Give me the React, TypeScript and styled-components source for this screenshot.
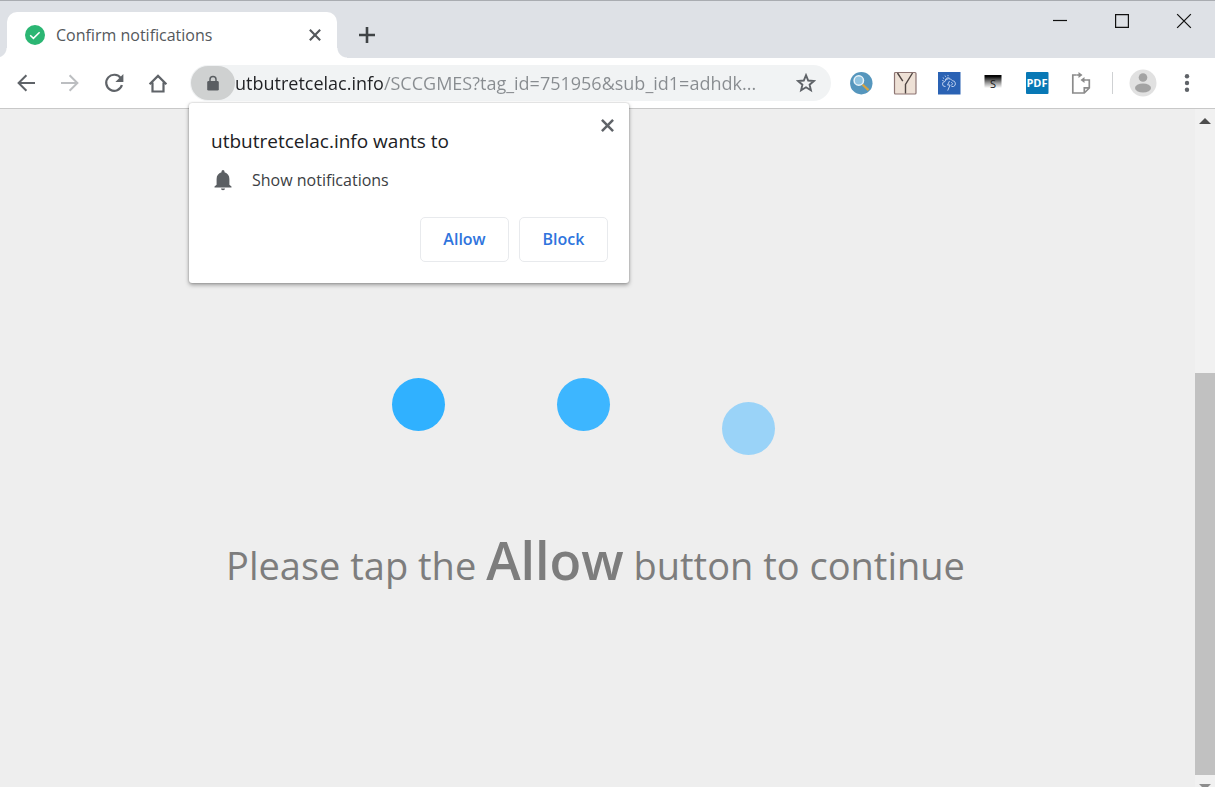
import React from "react";
import styled, { createGlobalStyle } from "styled-components";

const Global = createGlobalStyle`
  *, *::before, *::after { box-sizing: border-box; }
  body { margin: 0; background: #eeeeee; font-family: "Open Sans", "Noto Sans", sans-serif; }
  button { font-family: inherit; padding: 0; border: 0; background: none; }
`;

const Window = styled.div`
  display: flex;
  flex-direction: column;
  height: 100vh;
  overflow: hidden;
`;

const TabStrip = styled.header`
  display: flex;
  align-items: flex-end;
  height: 58px;
  padding-left: 7px;
  background: #dee1e6;
  border-top: 1px solid #a9acb1;
`;

const Tab = styled.div`
  position: relative;
  display: flex;
  align-items: center;
  flex: 0 1 330px;
  height: 46px;
  padding: 0 12px 0 18px;
  background: #ffffff;
  border-radius: 10px 10px 0 0;

  &::before,
  &::after {
    content: "";
    position: absolute;
    bottom: 0;
    width: 10px;
    height: 10px;
  }
  &::before {
    right: 100%;
    background: radial-gradient(circle at 0 0, transparent 9px, #ffffff 10px);
  }
  &::after {
    left: 100%;
    background: radial-gradient(circle at 100% 0, transparent 9px, #ffffff 10px);
  }
`;

const TabTitle = styled.span`
  flex: 1;
  margin-left: 11px;
  font-size: 16px;
  line-height: 20px;
  color: #54585c;
  white-space: nowrap;
`;

const IconButton = styled.button<{ $w?: number; $h?: number }>`
  display: flex;
  flex: none;
  align-items: center;
  justify-content: center;
  width: ${(p) => p.$w ?? 44}px;
  height: ${(p) => p.$h ?? 36}px;
`;

const WindowControls = styled.div`
  display: flex;
  align-self: flex-start;
  margin-left: auto;
`;

const Toolbar = styled.div`
  display: flex;
  align-items: center;
  height: 51px;
  padding: 0 6px 0 4px;
  background: #ffffff;
  border-bottom: 1px solid #c8c8c8;
`;

const Group = styled.div`
  display: flex;
  flex: none;
  align-items: center;
`;

const Omnibox = styled.div`
  position: relative;
  display: flex;
  flex: 1;
  align-items: center;
  min-width: 0;
  height: 36px;
  margin: 0 8px 0 10px;
  padding-left: 1px;
  background: #f1f3f4;
  border-radius: 18px;
`;

const LockButton = styled(IconButton)`
  height: 34px;
  background: #cfd1d1;
  border-radius: 17px;
`;

const Address = styled.input`
  flex: 1;
  min-width: 0;
  padding: 0;
  border: 0;
  outline: 0;
  font-family: inherit;
  font-size: 18px;
  line-height: 26px;
  color: #80868b;
  background: linear-gradient(90deg, #202124 149px, #888c90 149px);
  background-clip: text;
  -webkit-background-clip: text;
  -webkit-text-fill-color: transparent;
`;

const Divider = styled.span`
  width: 1px;
  height: 22px;
  margin: 0 8px 0 9px;
  background: #cfd1d3;
`;

const Popup = styled.section`
  position: absolute;
  z-index: 2;
  top: calc(100% + 2px);
  left: -1px;
  width: 440px;
  padding: 24px 21px 21px 22px;
  background: #ffffff;
  border-radius: 3px;
  box-shadow: 0 2px 4px rgba(0, 0, 0, 0.35), 0 0 2px rgba(0, 0, 0, 0.25);
`;

const PopupTitle = styled.h1`
  margin: 0;
  font-size: 19px;
  font-weight: 400;
  line-height: 28px;
  color: #202124;
`;

const PopupClose = styled(IconButton)`
  position: absolute;
  top: 10px;
  right: 10px;
`;

const Permission = styled.p`
  display: flex;
  align-items: center;
  gap: 17px;
  height: 24px;
  margin: 13px 0 25px;
  font-size: 16px;
  line-height: 24px;
  color: #3c4043;
`;

const PopupActions = styled.div`
  display: flex;
  justify-content: flex-end;
  gap: 10px;
`;

const ActionButton = styled.button`
  width: 89px;
  height: 45px;
  && {
    padding-bottom: 2px;
    border: 1px solid #e8eaed;
  }
  border-radius: 5px;
  font-size: 16px;
  font-weight: 600;
  color: #2f74dd;
`;

const Viewport = styled.div`
  display: flex;
  flex: 1;
  min-height: 0;
`;

const Page = styled.main`
  display: flex;
  flex: 1;
  flex-direction: column;
  align-items: center;
  padding-top: 269px;
  background: #eeeeee;
`;

const Dots = styled.div`
  display: flex;
  gap: 112px;
  padding-right: 29px;
`;

const Dot = styled.span<{ $color: string; $drop?: boolean }>`
  width: 53px;
  height: 53px;
  margin-top: ${(p) => (p.$drop ? 24 : 0)}px;
  background: ${(p) => p.$color};
  border-radius: 50%;
`;

const Message = styled.p`
  margin: 65px 0 0;
  padding-right: 4px;
  font-size: 38px;
  line-height: 80px;
  color: #7d7d7d;
  white-space: nowrap;

  strong {
    font-size: 52px;
    font-weight: 600;
  }
`;

const Scrollbar = styled.div`
  display: flex;
  flex: none;
  flex-direction: column;
  width: 20px;
  background: #f1f1f1;
`;

const Track = styled.div`
  display: grid;
  flex: 1;
  grid-template-rows: 240fr 402fr;
`;

const Thumb = styled.div`
  grid-row: 2;
  background: #c1c1c1;
`;

const CloseIcon = ({ size, width, color }: { size: number; width: number; color: string }) => (
  <svg width={size} height={size} viewBox="0 0 14 14" fill="none" stroke={color} strokeWidth={width}>
    <path d="M1 1l12 12M13 1L1 13" />
  </svg>
);

const grey = "#5f6368";

export default function App() {
  return (
    <Window>
      <Global />
      <TabStrip>
        <Tab>
          <svg width="20" height="20" viewBox="0 0 20 20">
            <circle cx="10" cy="10" r="10" fill="#2bb673" />
            <path d="M5.2 10.3l3.2 3.1 6.2-6.2" fill="none" stroke="#fff" strokeWidth="1.5" />
          </svg>
          <TabTitle>Confirm notifications</TabTitle>
          <IconButton $w={20} aria-label="Close tab">
            <CloseIcon size={12} width={2.5} color="#54585c" />
          </IconButton>
        </Tab>
        <IconButton $w={60} $h={46} aria-label="New tab">
          <svg width="18" height="18" viewBox="0 0 18 18" stroke="#3f4346" strokeWidth="2.6">
            <path d="M9 1v16M1 9h16" />
          </svg>
        </IconButton>
        <WindowControls>
          <IconButton $w={62} $h={40} aria-label="Minimize">
            <svg width="14" height="14" viewBox="0 0 14 14" stroke="#111" strokeWidth="1.2">
              <path d="M0 6.5h14" />
            </svg>
          </IconButton>
          <IconButton $w={62} $h={40} aria-label="Maximize">
            <svg width="14" height="14" viewBox="0 0 14 14" fill="none" stroke="#111" strokeWidth="1.2">
              <path d="M.6.6h12.8v12.8H.6z" />
            </svg>
          </IconButton>
          <IconButton $w={62} $h={40} aria-label="Close window">
            <CloseIcon size={16} width={1.1} color="#111" />
          </IconButton>
        </WindowControls>
      </TabStrip>

      <Toolbar>
        <Group as="nav">
          <IconButton aria-label="Back">
            <svg width="18" height="18" viewBox="0 0 18 18" fill="none" stroke={grey} strokeWidth="2">
              <path d="M18 9H1.6M9.4 1.2L1.6 9l7.8 7.8" />
            </svg>
          </IconButton>
          <IconButton aria-label="Forward">
            <svg width="18" height="18" viewBox="0 0 18 18" fill="none" stroke="#bcbec1" strokeWidth="2">
              <path d="M0 9h16.4M8.6 1.2L16.4 9l-7.8 7.8" />
            </svg>
          </IconButton>
          <IconButton aria-label="Reload">
            <svg width="20" height="20" viewBox="0 0 20 20" fill="none" stroke={grey} strokeWidth="2.2">
              <path d="M16.8 5.2A8 8 0 1 0 17.9 12" />
              <path d="M19.4 1v8h-8z" fill={grey} stroke="none" />
            </svg>
          </IconButton>
          <IconButton aria-label="Home">
            <svg width="20" height="20" viewBox="0 0 20 20" fill="none" stroke={grey} strokeWidth="2.2">
              <path d="M1.6 11.3L10 2.9l8.400 8.400M4.500 9.500v9h11v-9" />
            </svg>
          </IconButton>
        </Group>

        <Omnibox>
          <LockButton aria-label="View site information">
            <svg width="12" height="16" viewBox="0 0 12 16">
              <rect x="0.2" y="6" width="11.6" height="9.6" rx="1.4" fill="#5a5e62" />
              <path d="M3 7V4.500a3 3 0 0 1 6 0V7" fill="none" stroke="#5a5e62" strokeWidth="1.5" />
            </svg>
          </LockButton>
          <Address
            aria-label="Address"
            type="text"
            defaultValue="utbutretcelac.info/SCCGMES?tag_id=751956&sub_id1=adhdk..."
          />
          <IconButton $w={50} aria-label="Bookmark this page">
            <svg width="20" height="20" viewBox="0 0 20 20" fill="none" stroke={grey} strokeWidth="1.9">
              <path d="M10 2.200l2.200 5.300 5.700.5-4.300 3.700 1.300 5.600-4.900-3-4.900 3 1.300-5.600L2.100 8l5.700-.5z" />
            </svg>
          </IconButton>

          <Popup role="dialog" aria-labelledby="permission-title">
            <PopupTitle id="permission-title">utbutretcelac.info wants to</PopupTitle>
            <PopupClose $w={24} $h={24} aria-label="Dismiss">
              <CloseIcon size={13} width={2.7} color={grey} />
            </PopupClose>
            <Permission>
              <svg width="24" height="24" viewBox="0 0 24 24" fill="#5b5f63">
                <path d="M12 22.3c1.100 0 2-.8 2-1.700h-4c0 .9.900 1.700 2 1.700zm6.400-5.600V11c0-3.300-1.800-6-4.900-6.700V3.600a1.500 1.500 0 0 0-3 0v.7C7.400 5 5.600 7.700 5.600 11v5.700L3.500 18.500v1h17v-1z" />
              </svg>
              Show notifications
            </Permission>
            <PopupActions>
              <ActionButton>Allow</ActionButton>
              <ActionButton>Block</ActionButton>
            </PopupActions>
          </Popup>
        </Omnibox>

        <Group>
          <IconButton aria-label="Search extension">
            <svg width="24" height="24" viewBox="0 0 24 24">
              <circle cx="12.300" cy="12.200" r="11.200" fill="#5596bd" />
              <path d="M13.500 13.500l6 5.600" stroke="#d9a441" strokeWidth="2.200" />
              <circle cx="9.800" cy="9.500" r="4.700" fill="#8fc3e0" stroke="#e9f3f8" strokeWidth="1.500" />
            </svg>
          </IconButton>
          <IconButton aria-label="Y extension">
            <svg width="24" height="24" viewBox="0 0 24 24" fill="none">
              <rect x="1.500" y="1.500" width="21.500" height="21.500" rx="1" fill="#eee1d6" stroke="#8d7573" strokeWidth="1.200" />
              <path d="M4.500 2l5.300 8.200M19.500 2l-7 11.500V22.500" stroke="#4f4542" strokeWidth="1.400" />
            </svg>
          </IconButton>
          <IconButton aria-label="Weather extension">
            <svg width="24" height="24" viewBox="0 0 24 24" fill="none">
              <rect x="1" y="1" width="22.500" height="22.500" fill="#2a62b4" />
              <g stroke="#bcd0ee" strokeWidth="1">
                <path d="M8.500 15.500H8a2.500 2.500 0 0 1 0-5 4 4 0 0 1 7.300-.8 3 3 0 0 1 1.200 5.800h-2" />
                <path d="M8.300 9.300a2.800 2.800 0 0 1 4.400-2M7 7.500L5.800 6.700M8.600 5.800L8 4.600M11 5.200V4M6.500 9.500H5.300" />
                <path d="M12.500 10l-2 4h2.600l-2.400 5.600M14 11.500c2 0 2 2.500 0 2.500" />
              </g>
            </svg>
          </IconButton>
          <IconButton aria-label="S extension">
            <svg width="20" height="20" viewBox="0 0 20 20">
              <defs>
                <linearGradient id="fade" x1="0" y1="0" x2="0" y2="1">
                  <stop offset="0.100" stopColor="#050505" />
                  <stop offset="0.600" stopColor="#999" />
                  <stop offset="1" stopColor="#fff" />
                </linearGradient>
              </defs>
              <rect x="1.500" y="2" width="17" height="13" fill="url(#fade)" />
              <text x="10" y="15" textAnchor="middle" fontFamily="Open Sans, sans-serif" fontSize="11" fill="#161616">
                S
              </text>
            </svg>
          </IconButton>
          <IconButton aria-label="PDF extension">
            <svg width="24" height="24" viewBox="0 0 24 24">
              <rect x="1" y="1" width="22.500" height="22" rx="1" fill="#0878b5" />
              <text x="12" y="16" textAnchor="middle" fontFamily="Open Sans, sans-serif" fontWeight="700" fontSize="11" fill="#fff">
                PDF
              </text>
            </svg>
          </IconButton>
          <IconButton aria-label="Page extension">
            <svg width="24" height="24" viewBox="0 0 24 24" fill="none" stroke="#8b8b8b" strokeWidth="1.700">
              <path d="M7.500 4H3.800v18h11.500l5-5V9h-3M15.300 21.800v-5h5" />
              <path d="M7.500 4h3.500M17.500 9H14" />
              <path d="M9.500 1l4 3-4 3zM15.500 6l-4 3 4 3z" fill="#8b8b8b" stroke="none" />
            </svg>
          </IconButton>
          <Divider />
          <IconButton aria-label="Profile">
            <svg width="28" height="28" viewBox="0 0 28 28">
              <circle cx="14" cy="14" r="13.500" fill="#e1e1e1" />
              <circle cx="14" cy="8.500" r="4.300" fill="#a3a3a3" />
              <ellipse cx="14" cy="19" rx="8" ry="4.500" fill="#a3a3a3" />
            </svg>
          </IconButton>
          <IconButton aria-label="Menu">
            <svg width="6" height="20" viewBox="0 0 6 20" fill={grey}>
              <circle cx="3" cy="3.200" r="2.200" />
              <circle cx="3" cy="10" r="2.200" />
              <circle cx="3" cy="16.800" r="2.200" />
            </svg>
          </IconButton>
        </Group>
      </Toolbar>

      <Viewport>
        <Page>
          <Dots aria-hidden="true">
            <Dot $color="#30b1ff" />
            <Dot $color="#3db6ff" />
            <Dot $color="#9ad3f8" $drop />
          </Dots>
          <Message>
            Please tap the <strong>Allow</strong> button to continue
          </Message>
        </Page>
        <Scrollbar aria-hidden="true">
          <IconButton $w={20} $h={24} tabIndex={-1}>
            <svg width="12" height="6" viewBox="0 0 12 6">
              <path d="M6 0l6 6H0z" fill="#4e4e4e" />
            </svg>
          </IconButton>
          <Track>
            <Thumb />
          </Track>
          <IconButton $w={20} $h={12} tabIndex={-1}>
            <svg width="12" height="12" viewBox="0 0 12 12">
              <path d="M0 9h12l-6 6z" fill="#8d8d8d" />
            </svg>
          </IconButton>
        </Scrollbar>
      </Viewport>
    </Window>
  );
}
